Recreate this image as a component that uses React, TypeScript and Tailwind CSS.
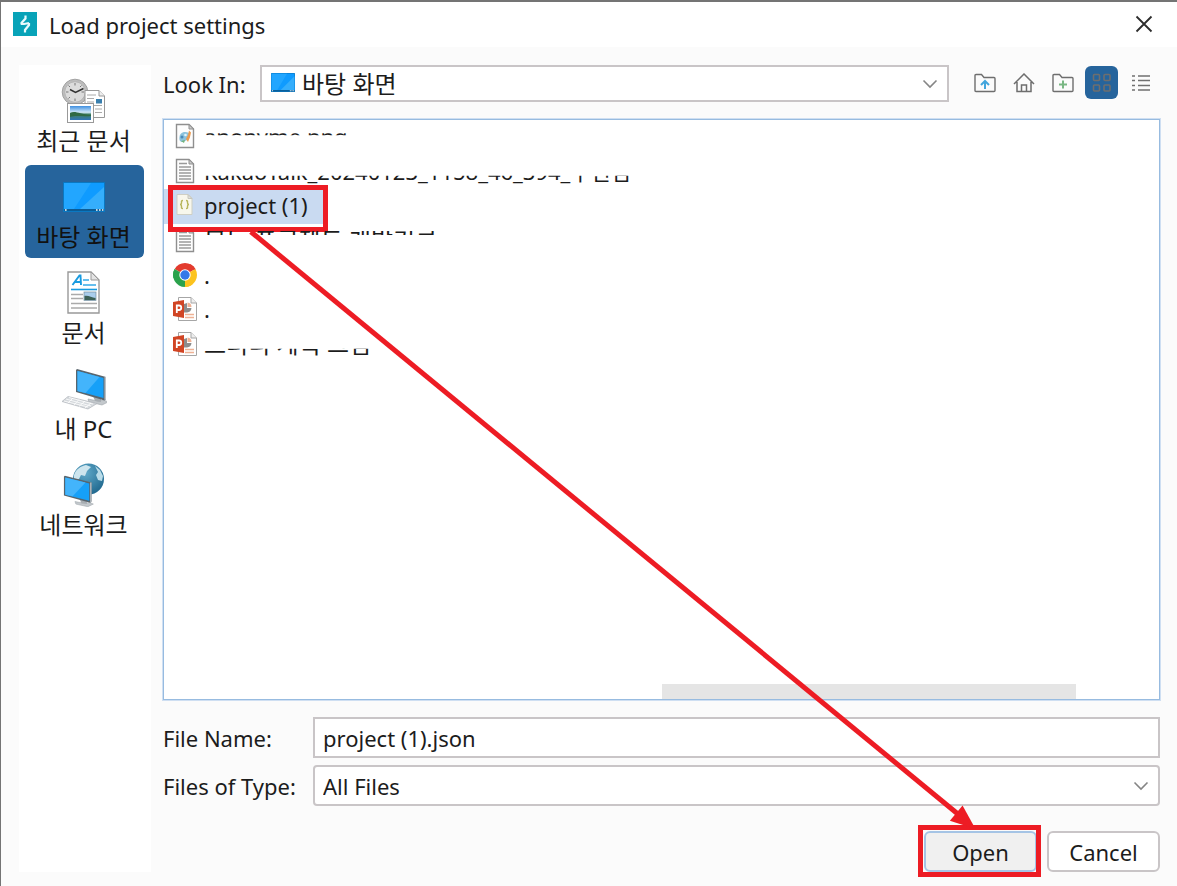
import { useLayoutEffect, useRef, useState } from "react";
import type { ReactNode } from "react";

function DesktopIcon({ className }: { className: string }) {
  return (
    <svg viewBox="0 0 42 30" preserveAspectRatio="none" className={className} aria-hidden="true">
      <rect width="42" height="30" rx="0.6" fill="#0a78c2" />
      <rect x="1" y="1" width="40" height="26" fill="#0f9bff" />
      <path d="M1 1H28L11 27H1Z" fill="#22a6ff" />
      <path d="M41 5V27H17Z" fill="#35aefc" />
      <rect x="1" y="27" width="40" height="2" fill="#0b5c96" />
      <path d="M2 28h1.6M33 28h1.6M36 28h1.6M39 28h1.4" stroke="#fff" strokeWidth="1.6" />
    </svg>
  );
}

function RecentIcon() {
  return (
    <svg viewBox="0 0 46 46" className="size-[46px]" aria-hidden="true">
      <defs>
        <linearGradient id="landscape" x1="0" y1="0" x2="0" y2="1">
          <stop offset="0" stopColor="#3f8fe0" />
          <stop offset="0.45" stopColor="#cfe7f8" />
          <stop offset="0.6" stopColor="#3f7f63" />
          <stop offset="1" stopColor="#2f74b8" />
        </linearGradient>
      </defs>
      <circle cx="14" cy="14" r="12.800" fill="#bdbdbd" stroke="#a3a3a3" />
      <circle cx="14" cy="14" r="10.300" fill="#dcdcdc" stroke="#b5b5b5" />
      <path d="M14 5v2.500M14 20.500V23M5 14h2.500M20.500 14H23M7.500 7.500 9 9M20.500 7.500 19 9M7.500 20.500 9 19" stroke="#777" />
      <path d="m9 11.500 5.500 3 8-4" fill="none" stroke="#333" strokeWidth="1.500" />
      <path d="M24 12.500h14l5.500 5.500v21.500H24Z" fill="#fff" stroke="#999" />
      <path d="M38 12.500V18h5.500" fill="#eee" stroke="#999" />
      <path d="M26 17h9M26 20.500h7M26 24h7M26 27.500h15M34 31h7M34 34.500h7" stroke="#aaa" />
      <rect x="35" y="21" width="6" height="4.500" fill="#397fae" />
      <rect x="6.500" y="25.500" width="26" height="19" fill="#fff" stroke="#999" />
      <rect x="9" y="28" width="21" height="14" fill="url(#landscape)" />
      <path d="M9 35c5-3 9 1 21 2v1c-9 1-15-1-21 1Z" fill="#2f6a45" />
    </svg>
  );
}

function DocumentIcon() {
  return (
    <svg viewBox="0 0 34 44" className="h-[44px] w-[34px]" aria-hidden="true">
      <path d="M1 1h23l8 8v33H1Z" fill="#fff" stroke="#999" strokeWidth="1.400" />
      <path d="M24 1v8h8Z" fill="#e4e4e4" stroke="#999" />
      <path d="m5.500 14 7-9.500h1L14 14M8 11h6" fill="none" stroke="#189be0" strokeWidth="1.900" />
      <path d="M16 9h6M16 14h13" stroke="#35a9e8" strokeWidth="1.300" />
      <path d="M4 18.500h26" stroke="#189be0" strokeWidth="1.600" />
      <path d="M4 23.500h12M4 27.500h12M4 32.500h26M4 37h26" stroke="#aaa" strokeWidth="1.300" />
      <rect x="17" y="21" width="12" height="8.500" fill="#a9cdec" stroke="#78909f" strokeWidth="0.700" />
      <path d="M17.500 25c4-1 7 2 11 2v2h-11Z" fill="#3c6157" />
    </svg>
  );
}

function ScreenShape() {
  return (
    <>
      <path d="m13 32 10 2 6-1 4 2-6 3-13-3Z" fill="#c3c8cc" stroke="#9da4aa" strokeWidth="0.600" />
      <path d="m18 29 8 2v4l-6-1Z" fill="#a7adb2" />
      <path d="m1 3 1-1 29 8v22l-1.500 1.500L1 25Z" fill="#59656d" />
      <path d="M29.500 10 31 10v22l-1.500 1Z" fill="#b9c0c5" />
      <path d="m2.500 4 26 7v20l-26-7Z" fill="#16a0f8" />
      <path d="m2.500 4 22 6-14 16-8-2Z" fill="#43b4fb" />
    </>
  );
}

function ComputerIcon() {
  return (
    <svg viewBox="0 0 46 42" className="h-[42px] w-[46px]" aria-hidden="true">
      <g transform="translate(14 -1)">
        <ScreenShape />
      </g>
      <path d="m7 28.500-6 5 26 7.500 9-5.500Z" fill="#d4d8dc" stroke="#b1b6bb" strokeWidth="0.700" />
      <path d="m5 31 25 7M3 33l24 6M8 29.500l24 6.500M12 30l-5 5M18 31.500l-5 5.500M24 33l-6 5.500M30 35l-6 5" stroke="#fff" strokeWidth="0.800" />
    </svg>
  );
}

function NetworkIcon() {
  return (
    <svg viewBox="0 0 44 44" className="size-[44px]" aria-hidden="true">
      <defs>
        <radialGradient id="globe" cx="0.4" cy="0.3" r="0.7">
          <stop offset="0" stopColor="#5fa9c9" />
          <stop offset="1" stopColor="#236b91" />
        </radialGradient>
      </defs>
      <circle cx="26.500" cy="16" r="15.500" fill="url(#globe)" />
      <path d="M12 12c2-6 7-9 12-10l5 2-4 4-2 5-4-1-2 4-5 2Z" fill="#cde5ee" />
      <path d="m33 3 5 4 3 6-1 5-4-1-2-5 2-3Z" fill="#b9dce9" />
      <g transform="translate(1 11) scale(.92 .86)">
        <ScreenShape />
      </g>
    </svg>
  );
}

function Page({ children }: { children: ReactNode }) {
  return (
    <svg viewBox="0 0 24 26" className="h-[26px] w-6" aria-hidden="true">
      <path d="M3.500 1.500h12.500l4.500 4.500v18.500h-17Z" fill="#fdfdfd" stroke="#8f8f8f" strokeWidth="1.400" />
      <path d="M16 1.500v4.500h4.500Z" fill="#ccc" stroke="#8f8f8f" />
      {children}
    </svg>
  );
}

function TextFileIcon() {
  return (
    <Page>
      <path d="M6 5.500h8M6 9h12M6 12h12M6 15h12M6 18h12M6 21h12" stroke="#9a9a9a" strokeWidth="1.400" />
    </Page>
  );
}

function ImageFileIcon() {
  return (
    <Page>
      <path d="M6.500 14c.5-5 5.500-6 9.500-4 2 2 1 6-2 7l-4 2c-3 0-4-2-3.500-5Z" fill="#8dc3dc" />
      <circle cx="9" cy="14" r="1.500" fill="#4b89b8" />
      <circle cx="12.500" cy="12" r="1.300" fill="#e4f4fb" />
      <path d="m16 7.500 2 2-1 4.500-2 5-2-3 2-4Z" fill="#ee9b4f" />
      <path d="m8 18 4-1-1 3Z" fill="#71b27a" />
    </Page>
  );
}

function JsonFileIcon() {
  return (
    <svg viewBox="0 0 24 26" className="h-[26px] w-6" aria-hidden="true">
      <path d="M4 2.500h11l4 4V22.500H4Z" fill="#f8f7ec" stroke="#cfcfc4" />
      <path d="M15 2.500v4h4Z" fill="#e1e1d8" stroke="#c6c6bd" />
      <path d="M10 8.500c-2 0-1.500 1.500-1.500 2.500S8 12.500 7 12.500c1 0 1.500 0 1.500 1.500S8 16.500 10 16.500M13 8.500c2 0 1.500 1.500 1.500 2.500s.5 1.500 1.500 1.500c-1 0-1.500 0-1.500 1.500s.5 2.500-1.500 2.500" fill="none" stroke="#b7b55c" strokeWidth="1.400" />
    </svg>
  );
}

function ChromeIcon() {
  return (
    <svg viewBox="0 0 24 24" className="size-6" aria-hidden="true">
      <path d="M12 12 1.610 6A12 12 0 0 1 22.390 6Z" fill="#e33b2e" />
      <path d="M12 12 22.390 6A12 12 0 0 1 12 24Z" fill="#fcc31e" />
      <path d="M12 12v12A12 12 0 0 1 1.610 6Z" fill="#2ba24c" />
      <path d="M12 6.400h10.600L22.390 6a12 12 0 0 0-5-4.700Z" fill="#e33b2e" />
      <path d="m16.850 14.800-5.300 9.200H12A12 12 0 0 0 20 21Z" fill="#fcc31e" />
      <path d="M7.150 14.800 1.610 6A12 12 0 0 0 .5 15Z" fill="#2ba24c" />
      <circle cx="12" cy="12" r="5.700" fill="#fff" />
      <circle cx="12" cy="12" r="4.700" fill="#3478e8" />
    </svg>
  );
}

function SlidesIcon() {
  return (
    <svg viewBox="0 0 24 26" className="h-[26px] w-6" aria-hidden="true">
      <path d="M5.500 1.500H18l5.500 5.500v17.500h-18Z" fill="#fff" stroke="#a6a6a6" />
      <path d="M18 1.500V7h5.500" fill="#eee" stroke="#a6a6a6" />
      <path d="M14 7v5h4.500A5 5 0 0 1 14 16.500h-3V8Z" fill="#8c8c8c" />
      <path d="M14.500 6.500a4.500 4.500 0 0 1 4 4.500h-4Z" fill="#efb295" />
      <path d="M12 18.500h9M12 21.500h9" stroke="#efb295" strokeWidth="1.300" />
      <path d="m0 6 11-2v18L0 20Z" fill="#d14524" />
      <path d="M3.800 17V9.500H6a2.200 2.200 0 0 1 0 4.500H4" fill="none" stroke="#fff" strokeWidth="1.800" />
    </svg>
  );
}

function FolderIcon({ children }: { children: ReactNode }) {
  return (
    <svg viewBox="0 0 22 20" className="h-5 w-[22px]" fill="none" strokeWidth="1.400" aria-hidden="true">
      <path d="M1 2.500Q1 1.500 2 1.500H7.500L10 4.500H20Q21 4.500 21 5.500V17.500Q21 18.500 20 18.500H2Q1 18.500 1 17.500Z" stroke="#6e6e6e" />
      {children}
    </svg>
  );
}

function Chevron() {
  return (
    <svg viewBox="0 0 16 10" className="pointer-events-none absolute right-[11px] h-[10px] w-4" fill="none" aria-hidden="true">
      <path d="m1.500 1.500 6.500 6.500 6.500-6.500" stroke="#858585" strokeWidth="1.600" />
    </svg>
  );
}

const places = [
  { label: "최근 문서", icon: <RecentIcon /> },
  { label: "바탕 화면", icon: <DesktopIcon className="h-[30px] w-[42px]" />, active: true },
  { label: "문서", icon: <DocumentIcon /> },
  { label: "내 PC", icon: <ComputerIcon /> },
  { label: "네트워크", icon: <NetworkIcon /> },
];

const files = [
  { name: "anonyme.png", icon: <ImageFileIcon />, clip: "text-[22px] [clip-path:inset(13px_0_17px_0)]" },
  { name: "KakaoTalk_20240123_1158_46_394_우현님", icon: <TextFileIcon />, clip: "text-[22px] [clip-path:inset(21px_0_0_0)]" },
  { name: "project (1)", icon: <JsonFileIcon />, clip: "text-[22px]", selected: true },
  { name: "모듬 프로젝트 개발기록", icon: <TextFileIcon />, clip: "text-[24px] [clip-path:inset(7px_0_21px_0)]" },
  { name: ".", icon: <ChromeIcon />, clip: "text-[22px]" },
  { name: ".", icon: <SlidesIcon />, clip: "text-[22px]" },
  { name: "스터디 계획 그림", icon: <SlidesIcon />, clip: "text-[24px] [clip-path:inset(21px_0_0_0)]" },
];

const toolButton = "flex size-[33px] items-center justify-center rounded-md";

export default function App() {
  const page = useRef<HTMLDivElement>(null);
  const source = useRef<HTMLSpanElement>(null);
  const target = useRef<HTMLSpanElement>(null);
  const [arrow, setArrow] = useState({ x1: 0, y1: 0, x2: 0, y2: 0 });

  useLayoutEffect(() => {
    const measure = () => {
      if (!page.current || !source.current || !target.current) return;
      const p = page.current.getBoundingClientRect();
      const a = source.current.getBoundingClientRect();
      const b = target.current.getBoundingClientRect();
      setArrow({
        x1: a.left + a.width / 2 + 2 - p.left,
        y1: a.bottom - 2 - p.top,
        x2: b.left + b.width / 2 - 5 - p.left,
        y2: b.top + 2 - p.top,
      });
    };
    measure();
    window.addEventListener("resize", measure);
    return () => window.removeEventListener("resize", measure);
  }, []);

  const angle = (Math.atan2(arrow.y2 - arrow.y1, arrow.x2 - arrow.x1) * 180) / Math.PI;

  return (
    <div
      ref={page}
      className="relative flex min-h-screen flex-col border-t-2 border-l border-[#747474] bg-[#fbfbfb] font-['Noto_Sans','Noto_Sans_CJK_KR',sans-serif] text-[22px] leading-8 text-[#1c1c1c]"
    >
      <header className="flex h-[45px] items-center bg-white pb-[2px] pl-3">
        <svg viewBox="0 0 24 24" className="size-6" aria-hidden="true">
          <rect width="24" height="24" fill="#08a3b8" />
          <path d="M12.500 3.500v3L8.500 11v1.500M8 12h3l5-1M16 11v2l-4 5v2.500" fill="none" stroke="#e9fbfd" strokeWidth="2.200" />
        </svg>
        <h1 className="ml-3 pt-[2px]">Load project settings</h1>
        <button aria-label="Close" className="mr-6 ml-auto">
          <svg viewBox="0 0 18 18" className="size-[18px]" aria-hidden="true">
            <path d="m1.500 1.500 15 15m0-15-15 15" stroke="#2d2d2d" strokeWidth="1.800" />
          </svg>
        </button>
      </header>

      <div className="flex flex-1 gap-3 pt-[18px] pr-[17px] pb-[14px] pl-[18px]">
        <nav className="flex w-[132px] shrink-0 flex-col gap-[3px] bg-white py-1 pr-[7px] pl-[6px] text-[24px]">
          {places.map((place) => (
            <button
              key={place.label}
              className={
                place.active
                  ? "flex h-[93px] flex-col items-center rounded-md bg-[#26649c] pr-[2px] text-[#111]"
                  : "flex h-[93px] flex-col items-center rounded-md pr-[2px]"
              }
            >
              <span className="flex h-14 items-center justify-center pt-[7px]">{place.icon}</span>
              <span>{place.label}</span>
            </button>
          ))}
        </nav>

        <main className="flex min-w-0 flex-1 flex-col">
          <div className="flex items-center">
            <label htmlFor="look-in" className="w-[97px]">Look In:</label>
            <div className="relative flex h-[37px] flex-1 items-center">
              <DesktopIcon className="pointer-events-none absolute top-2 left-[11px] h-[19px] w-6" />
              <select id="look-in" className="h-full w-full appearance-none border-2 border-[#c9c5c7] bg-white pl-10 text-[24px] leading-8">
                <option>바탕 화면</option>
              </select>
              <Chevron />
            </div>
            <div className="mr-[3px] ml-[19px] flex gap-[6px] pb-[2px]">
              <button aria-label="Up one level" className={toolButton}>
                <FolderIcon>
                  <path d="M11 16V8m-4 4 4-4 4 4" stroke="#42a5dc" strokeWidth="2" />
                </FolderIcon>
              </button>
              <button aria-label="Home" className={toolButton}>
                <svg viewBox="0 0 22 20" className="h-5 w-[22px]" fill="none" stroke="#6e6e6e" strokeWidth="1.500" aria-hidden="true">
                  <path d="M1 11 11 1l10 10M4 9v9.500h14V9M8.500 18.500V12h5v6.500" />
                </svg>
              </button>
              <button aria-label="New folder" className={toolButton}>
                <FolderIcon>
                  <path d="M11 7.500v8M7 11.500h8" stroke="#79b783" strokeWidth="2" />
                </FolderIcon>
              </button>
              <button aria-label="List view" aria-pressed="true" className="flex size-[33px] items-center justify-center rounded-md bg-[#26649c]">
                <svg viewBox="0 0 20 20" className="size-5" fill="none" stroke="#6e6e6e" strokeWidth="1.600" aria-hidden="true">
                  <rect x="1.500" y="1.500" width="6" height="6" rx="1" />
                  <rect x="12" y="1.500" width="6" height="6" rx="1" />
                  <rect x="1.500" y="12" width="6" height="6" rx="1" />
                  <rect x="12" y="12" width="6" height="6" rx="1" />
                </svg>
              </button>
              <button aria-label="Details view" className={toolButton}>
                <svg viewBox="0 0 20 18" className="h-[18px] w-5" stroke="#707070" strokeWidth="1.500" aria-hidden="true">
                  <path d="M1 2h3M7 2h12M1 6.500h3M7 6.500h12M1 11.500h3M7 11.500h12M1 16h3M7 16h12" />
                </svg>
              </button>
            </div>
          </div>

          <section aria-label="Files" className="mt-[17px] flex flex-1 flex-col border border-[#97bbe0] bg-white ring-1 ring-[#cfdff2]">
            <ul className="grid h-[242px] auto-rows-fr">
              {files.map((file, i) => (
                <li key={i} className="flex min-h-0">
                  <button
                    className={
                      file.selected
                        ? "relative flex h-full items-center bg-[#c9daf1] pr-[18px] pb-[2px] pl-[9px]"
                        : "flex h-full items-center pb-[2px] pl-[9px]"
                    }
                  >
                    {file.icon}
                    <span className={`ml-[7px] whitespace-nowrap ${file.clip}`}>{file.name}</span>
                    {file.selected && (
                      <span ref={source} className="absolute -top-1 -right-[2px] -bottom-2 left-1 border-[5px] border-[#ed1c24]" />
                    )}
                  </button>
                </li>
              ))}
            </ul>
            <div className="mt-auto ml-[50%] h-[15px] w-[414px] bg-[#e5e5e5]" />
          </section>

          <div className="mt-[17px] flex items-center">
            <label htmlFor="file-name" className="w-[150px]">File Name:</label>
            <input id="file-name" defaultValue="project (1).json" className="h-[41px] min-w-0 flex-1 border-2 border-[#c9c5c7] bg-white px-2" />
          </div>
          <div className="mt-[7px] flex items-center">
            <label htmlFor="file-type" className="w-[150px]">Files of Type:</label>
            <div className="relative flex h-[41px] flex-1 items-center">
              <select id="file-type" className="h-full w-full appearance-none rounded-[4px] border-2 border-[#c9c5c7] bg-white px-2">
                <option>All Files</option>
              </select>
              <Chevron />
            </div>
          </div>
          <div className="mt-[25px] flex justify-end gap-[10px]">
            <button className="relative h-[41px] w-[113px] rounded-md border-2 border-[#a5c4e5] bg-[#f0f0f0]">
              Open
              <span ref={target} className="absolute -top-2 -right-[6px] -bottom-[7px] -left-2 border-[5px] border-[#ed1c24]" />
            </button>
            <button className="h-[41px] w-[113px] rounded-md border-2 border-[#c9c5c7] bg-white">Cancel</button>
          </div>
        </main>
      </div>

      <svg className="pointer-events-none absolute inset-0 size-full" aria-hidden="true">
        <line x1={arrow.x1} y1={arrow.y1} x2={arrow.x2 - 14} y2={arrow.y2 - 12} stroke="#ed1c24" strokeWidth="5" />
        <path d="M0 0-25-10V10Z" fill="#ed1c24" transform={`translate(${arrow.x2} ${arrow.y2}) rotate(${angle})`} />
      </svg>
    </div>
  );
}
